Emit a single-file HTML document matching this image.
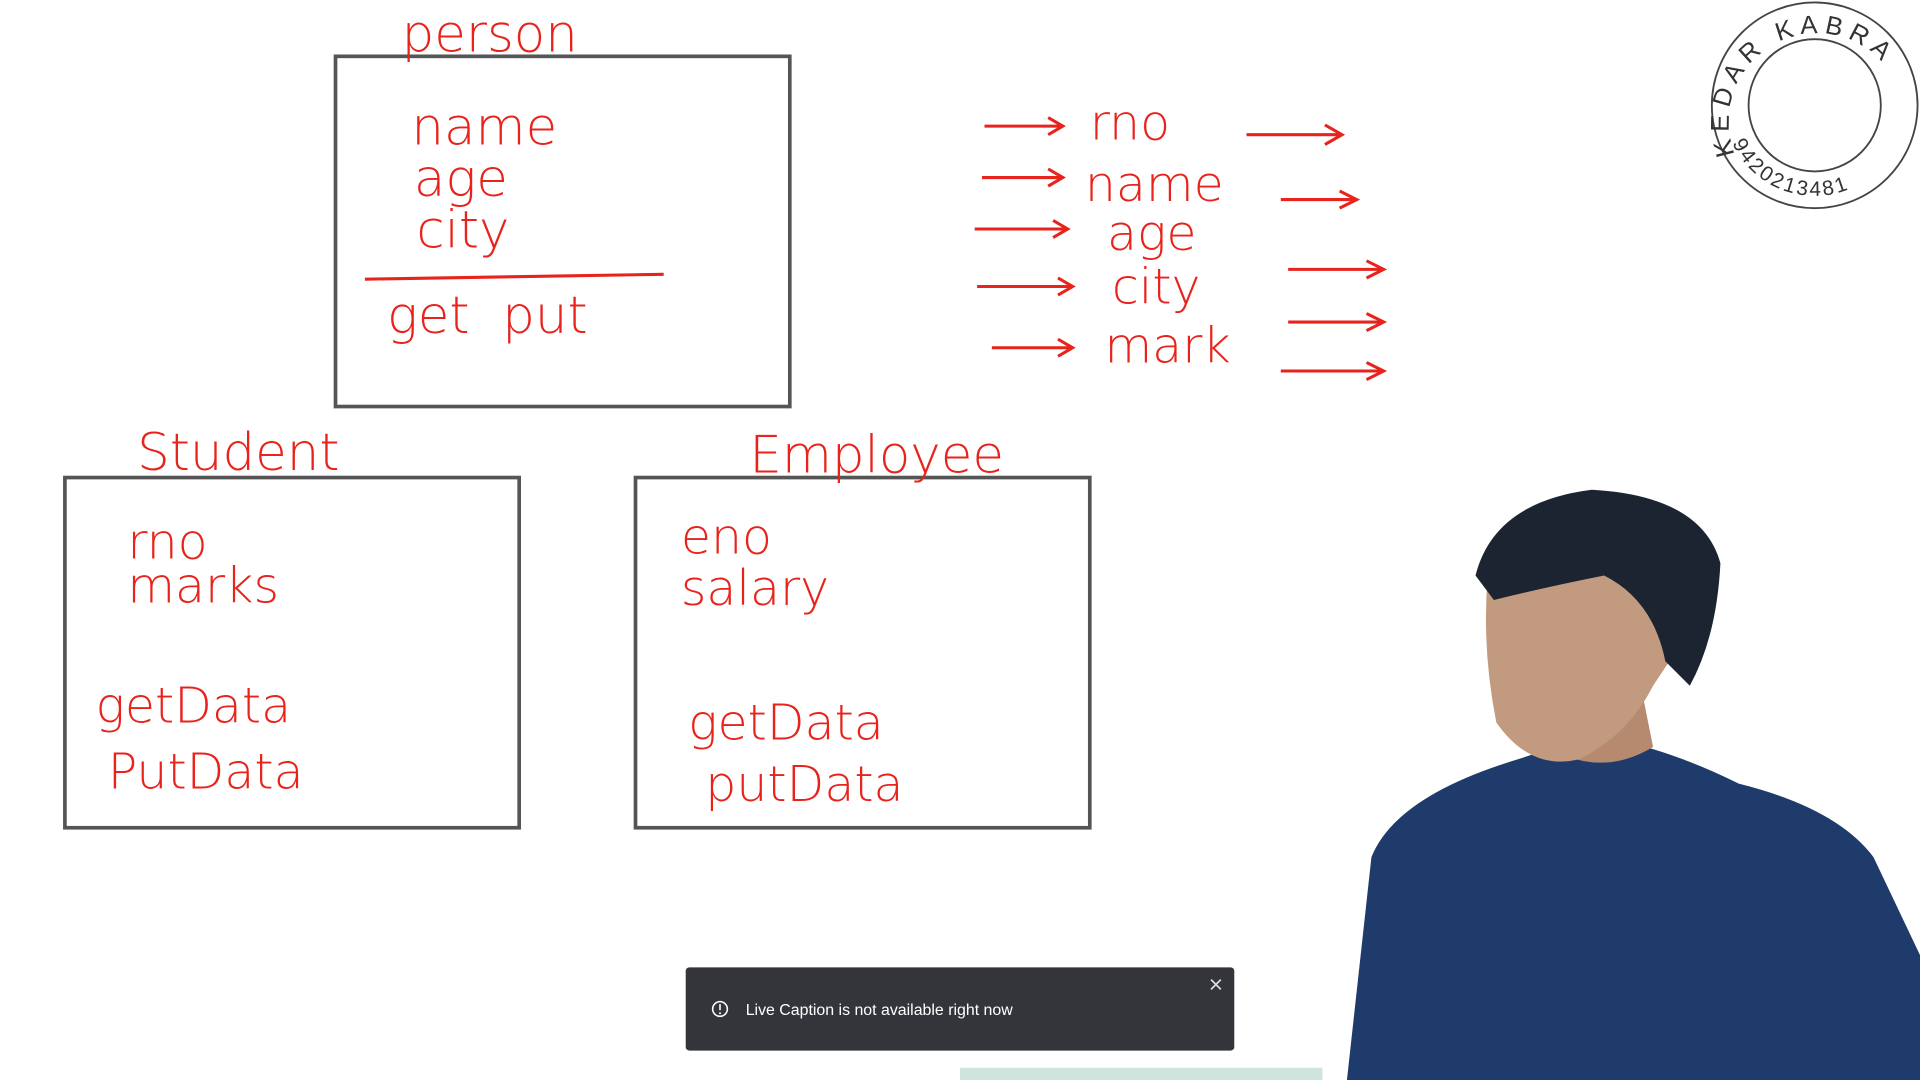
<!DOCTYPE html>
<html><head><meta charset="utf-8"><style>
html,body{margin:0;padding:0;background:#fff;overflow:hidden}
svg{display:block}
.h{font-family:"DejaVu Sans","Liberation Sans",sans-serif;fill:#e8231c;font-weight:300}
</style></head><body>
<svg width="1920" height="1080" viewBox="0 0 1568 882" xmlns="http://www.w3.org/2000/svg">
<rect width="1568" height="882" fill="#fff"/>
<g fill="none" stroke="#555" stroke-width="3">
<rect x="274" y="46" width="371" height="286"/>
<rect x="53" y="390" width="371" height="286"/>
<rect x="519" y="390" width="371" height="286"/>
</g>
<line x1="298" y1="228" x2="542" y2="224" stroke="#e8231c" stroke-width="2.5"/>
<g class="h">
<text x="328" y="42" font-size="42">person</text>
<text x="336" y="118" font-size="42">name</text>
<text x="338" y="160" font-size="42">age</text>
<text x="340" y="202" font-size="42">city</text>
<text x="316" y="272" font-size="42">get&#160;&#160;put</text>
<text x="112" y="384" font-size="42">Student</text>
<text x="612" y="386" font-size="42">Employee</text>
<text x="104" y="456" font-size="40">rno</text>
<text x="104" y="492" font-size="40">marks</text>
<text x="78" y="590" font-size="40">getData</text>
<text x="88" y="644" font-size="40">PutData</text>
<text x="556" y="452" font-size="40">eno</text>
<text x="556" y="494" font-size="40">salary</text>
<text x="562" y="604" font-size="40">getData</text>
<text x="576" y="654" font-size="40">putData</text>
<text x="890" y="114" font-size="40">rno</text>
<text x="886" y="164" font-size="40">name</text>
<text x="904" y="204" font-size="40">age</text>
<text x="908" y="248" font-size="40">city</text>
<text x="902" y="296" font-size="40">mark</text>
</g>
<g stroke="#e8231c" stroke-width="2.5" fill="none">
<path d="M804 103h64M856 96l12 7-12 7"/>
<path d="M802 145h66M856 138l12 7-12 7"/>
<path d="M796 187h76M860 180l12 7-12 7"/>
<path d="M798 234h78M864 227l12 7-12 7"/>
<path d="M810 284h66M864 277l12 7-12 7"/>
<path d="M1018 110h78M1082 102l14 8-14 8"/>
<path d="M1046 163h62M1094 156l14 7-14 7"/>
<path d="M1052 220h78M1116 213l14 7-14 7"/>
<path d="M1052 263h78M1116 256l14 7-14 7"/>
<path d="M1046 303h84M1116 296l14 7-14 7"/>
</g>
<g fill="none" stroke="#444" stroke-width="1.5">
<circle cx="1482" cy="86" r="84"/>
<circle cx="1482" cy="86" r="54"/>
</g>
<defs>
<path id="top" d="M1417 126 A72 72 0 1 1 1555 110"/>
<path id="bot" d="M1412 110 A74 74 0 0 0 1552 110"/>
</defs>
<text font-family="Liberation Sans,sans-serif" font-size="21" fill="#333" letter-spacing="5"><textPath href="#top">KEDAR KABRA</textPath></text>
<text font-family="Liberation Sans,sans-serif" font-size="17" fill="#333" letter-spacing="2"><textPath href="#bot" startOffset="4%">9420213481</textPath></text>
<path d="M1100 882 L1120 700 Q1140 650 1240 620 L1300 600 Q1360 610 1420 640 Q1500 660 1530 700 L1568 780 L1568 882 Z" fill="#1f3b6c"/>
<path d="M1250 600 Q1300 640 1350 610 L1340 560 L1260 560 Z" fill="#b58a6e"/>
<path d="M1215 470 Q1210 530 1222 590 Q1250 630 1290 620 Q1330 600 1350 560 L1370 530 Q1380 480 1350 460 L1230 450 Z" fill="#c19a80"/>
<path d="M1205 470 Q1220 410 1300 400 Q1390 405 1405 460 Q1402 520 1380 560 L1360 540 Q1350 490 1310 470 Q1260 480 1220 490 Z" fill="#1b2430"/>
<path d="M784 872 L1080 872 L1080 882 L784 882 Z" fill="#cfe4dc"/>
<rect x="560" y="790" width="448" height="68" rx="3" fill="#34353a"/>
<circle cx="588" cy="824" r="6" fill="none" stroke="#fff" stroke-width="1.3"/>
<line x1="588" y1="820" x2="588" y2="825" stroke="#fff" stroke-width="1.3"/>
<circle cx="588" cy="827.5" r="0.8" fill="#fff"/>
<text x="609" y="829" font-family="Liberation Sans,sans-serif" font-size="13" fill="#fff">Live Caption is not available right now</text>
<path d="M989 800l8 8M997 800l-8 8" stroke="#ddd" stroke-width="1.4"/>
</svg>
</body></html>
